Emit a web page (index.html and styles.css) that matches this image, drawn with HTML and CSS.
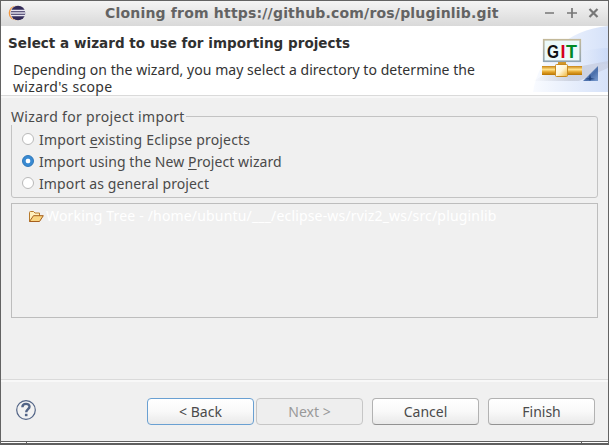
FILE: index.html
```html
<!DOCTYPE html>
<html lang="en">
<head>
<meta charset="utf-8">
<title>Cloning from https://github.com/ros/pluginlib.git</title>
<link rel="stylesheet" href="styles.css">
</head>
<body>
<div class="window">
  <header class="titlebar">
    <svg class="app-icon" width="18" height="16" viewBox="0 0 18 16">
      <circle cx="8" cy="8" r="7.3" fill="#f3953a"/>
      <circle cx="9.5" cy="8" r="7.5" fill="#f4eee9"/>
      <circle cx="10" cy="8" r="7.3" fill="#332b59"/>
      <path d="M3 5.5h14M2.5 8h15M3 10.500h14" stroke="#e8e6f1" stroke-width="1.3"/>
    </svg>
    <h1 class="title">Cloning from https://github.com/ros/pluginlib.git</h1>
    <svg class="controls" width="56" height="12" viewBox="0 0 56 12" fill="none" stroke="#777" stroke-width="1.7">
      <path d="M1 6h9M23 6h10M28 1v10"/>
      <path d="M45.500 2l8 8M53.500 2l-8 8" stroke-width="2.200"/>
    </svg>
  </header>
  <section class="banner">
    <div class="banner-text">
      <h2 class="heading">Select a wizard to use for importing projects</h2>
      <p class="description"><span class="desc-line">Depending on the wizard, you may select a directory to determine the</span><br><span class="desc-end">wizard's scope</span></p>
    </div>
    <svg class="banner-art" width="75" height="66" viewBox="0 0 75 66">
      <defs>
        <linearGradient id="sky" x1="0" y1="0" x2="1" y2="0"><stop offset="0" stop-color="#f9fbff"/><stop offset="1" stop-color="#d6e2f9"/></linearGradient>
        <linearGradient id="sky2" x1="0" y1="0" x2="1" y2="0"><stop offset="0" stop-color="#fff" stop-opacity=".5"/><stop offset="1" stop-color="#bccff4"/></linearGradient>
        <linearGradient id="shade" x1="0" y1="0" x2="1" y2="0"><stop offset="0" stop-color="#b8bcc8" stop-opacity="0"/><stop offset=".5" stop-color="#b8bcc8" stop-opacity=".55"/><stop offset="1" stop-color="#c5cbe0" stop-opacity=".6"/></linearGradient>
        <linearGradient id="pipe" x1="0" y1="0" x2="0" y2="1"><stop offset="0" stop-color="#c88210"/><stop offset=".4" stop-color="#ffe28b"/><stop offset=".65" stop-color="#e4a52c"/><stop offset="1" stop-color="#b87300"/></linearGradient>
        <linearGradient id="box" x1="0" y1="0" x2="1" y2="1"><stop offset="0" stop-color="#fff"/><stop offset=".5" stop-color="#fff5d4"/><stop offset="1" stop-color="#f0b435"/></linearGradient>
        <linearGradient id="tri" x1="0" y1="0" x2="1" y2="1"><stop offset="0" stop-color="#a9bfe2"/><stop offset=".6" stop-color="#4a6fab"/><stop offset="1" stop-color="#7d9ed0"/></linearGradient>
        <linearGradient id="frame" x1="0" y1="0" x2="0" y2="1"><stop offset="0" stop-color="#c3b99a"/><stop offset="1" stop-color="#91a4b3"/></linearGradient>
      </defs>
      <path d="M0 66C5 31 34 4 75 0V66Z" fill="url(#sky)"/>
      <path d="M29 37C40 27 57 22 75 22V38Z" fill="url(#sky2)" opacity=".45"/>
      <path d="M0 55L17 46 75 35V42L46 55Z" fill="url(#shade)"/>
      <rect x="25" y="35" width="8" height="5" fill="#d39625"/>
      <rect x="9" y="40" width="40" height="9" fill="url(#pipe)"/>
      <rect x="22.500" y="38.500" width="12" height="12" rx="1" fill="url(#box)" stroke="#c88a20"/>
      <rect x="10.750" y="13.750" width="36.500" height="21.500" fill="#ecfafa" stroke="url(#frame)" stroke-width="1.700"/>
      <text class="git" y="31.500"><tspan x="14" fill="#111" textLength="12" lengthAdjust="spacingAndGlyphs">G</tspan><tspan x="27.500" fill="#d5001c">I</tspan><tspan x="33" fill="#008a25">T</tspan></text>
      <path d="M50 55L65 40V55Z" fill="url(#tri)"/>
      <path d="M57 48l1 4 4 1-4 .5-1 1.500-1-1.500-4-.5 4-1Z" fill="#24457f"/>
    </svg>
  </section>
  <main class="content">
    <fieldset class="group">
      <legend>Wizard for project import</legend>
      <div class="radio"><i class="dot"></i><span class="r1">Import <u>e</u>xisting Eclipse projects</span></div>
      <div class="radio"><i class="dot checked"></i><span class="r2">Import using the New <u>P</u>roject wizard</span></div>
      <div class="radio"><i class="dot"></i><span class="r3">Import as general project</span></div>
    </fieldset>
    <div class="tree">
      <svg width="16" height="13" viewBox="0 0 16 13">
        <path d="M1.500 11.500V2.500Q1.500 1.500 2.500 1.500H5.500L7 3H11.500V6" fill="#fff0bd" stroke="#b77a2c"/>
        <path d="M1.500 11.500L5.500 5.700H15.300L11.500 11.500Z" fill="#f9d581" stroke="#a65f1d"/>
      </svg>
      <span class="tree-label">Working Tree - /home/ubuntu/___/eclipse-ws/rviz2_ws/src/pluginlib</span>
    </div>
  </main>
  <footer class="footer">
    <svg class="help" width="20" height="20" viewBox="0 0 20 20" fill="none" stroke="#526486">
      <circle cx="10" cy="10" r="9.300" fill="#f2f2f2" stroke-width="1.200"/>
      <path d="M6.400 7.200C6.400 2.700 13.600 2.900 13.500 6.700C13.500 9 10.200 9.200 10.200 12.200" stroke-width="2.400"/>
      <path d="M8.900 15h2.600" stroke-width="2.400"/>
    </svg>
    <button class="btn focused">&lt; Back</button>
    <button class="btn disabled" disabled>Next &gt;</button>
    <button class="btn cancel">Cancel</button>
    <button class="btn finish">Finish</button>
  </footer>
  <div class="behind"><i></i><i></i><i></i></div>
</div>
</body>
</html>
```
FILE: styles.css
```css
* { box-sizing: border-box; }
body {
  margin: 0;
  font: 14px/17px "Noto Sans", sans-serif;
  color: #4a4a4a;
  white-space: nowrap;
}
.window {
  width: 609px;
  height: 445px;
  display: flex;
  flex-direction: column;
  background: #f0f0f0;
  border: 1px solid #636363;
  border-bottom: 0;
  overflow: hidden;
}
.titlebar {
  height: 25px;
  flex: none;
  display: flex;
  align-items: center;
  padding: 0 8px 1px 7px;
  background: linear-gradient(#f4f4f4, #d9d9d9);
}
.title {
  margin: 0 0 0 79px;
  flex: 1;
  font: bold 14px/24px "DejaVu Sans", sans-serif;
  letter-spacing: .19px;
  color: #636363;
}
.banner {
  height: 70px;
  flex: none;
  display: flex;
  justify-content: space-between;
  background: #fff;
  border-bottom: 1px solid #dadada;
}
.banner-text { padding: 8px 0 0 7px; }
.heading {
  margin: 0;
  font: bold 13.500px/18px "DejaVu Sans", sans-serif;
  letter-spacing: .04px;
  color: #303030;
}
.description { margin: 9px 0 0 5px; color: #333; }
.desc-line { letter-spacing: .045px; }
.desc-end { letter-spacing: .35px; }
.git { font: bold 18px "Liberation Sans", sans-serif; }
.content {
  height: 284px;
  flex: none;
  padding: 10px 10px 0;
  border-top: 2px solid #f7f7f7;
  border-bottom: 1px solid #dadada;
}
.group {
  height: 90px;
  margin: 0;
  padding: 3px 10px 0;
  border: 1px solid #c3c3c3;
  border-radius: 3px;
}
legend { margin-left: -11px; padding: 0 1px 0 0; letter-spacing: .32px; }
.radio { height: 22px; display: flex; align-items: center; gap: 5px; }
.r1 { letter-spacing: .18px; }
.r2 { letter-spacing: .08px; }
.r3 { letter-spacing: .12px; }
.dot {
  width: 12px;
  height: 12px;
  flex: none;
  border: 1px solid #b9b9b9;
  border-radius: 50%;
  background: #fff;
}
.checked { border-color: #2b76b9; background: radial-gradient(circle, #fff 0 2px, #398ad2 2.7px); }
u { text-underline-offset: 2px; text-decoration-thickness: 1px; }
.tree {
  height: 115px;
  margin-top: 5px;
  padding: 3px 0 0 16px;
  display: flex;
  align-items: flex-start;
  gap: 1px;
  border: 1px solid #bdbdbd;
  color: #fff;
}
.tree svg { margin-top: 3px; }
.tree-label { margin-left: 1px; letter-spacing: .17px; }
.footer {
  height: 61px;
  flex: none;
  display: flex;
  align-items: flex-start;
  padding: 16px 13px 0 15px;
  border-top: 2px solid #f8f8f8;
}
.help { margin: 2px 111px 0 0; flex: none; }
.btn {
  width: 107px;
  height: 27px;
  flex: none;
  padding: 0;
  border: 1px solid #b2b2b2;
  border-bottom-color: #929292;
  border-radius: 4px;
  background: linear-gradient(#fff, #f9f9f9 50%, #e9e9e9);
  font: 14px/22px "Noto Sans", sans-serif;
  color: #4a4a4a;
}
.focused { border-color: #6aa0d2; }
.disabled { margin-left: 2px; background: #eee; border-color: #c6c6c6; color: #999; }
.cancel, .finish { margin-left: 9px; }
.behind {
  height: 4px;
  flex: none;
  display: grid;
  grid-template-columns: 25px 1fr 26px;
  column-gap: 1px;
  background: #606060;
  padding: 1px 0;
  border-bottom: 1px solid #606060;
}
.behind i { background: #fff; }
```
